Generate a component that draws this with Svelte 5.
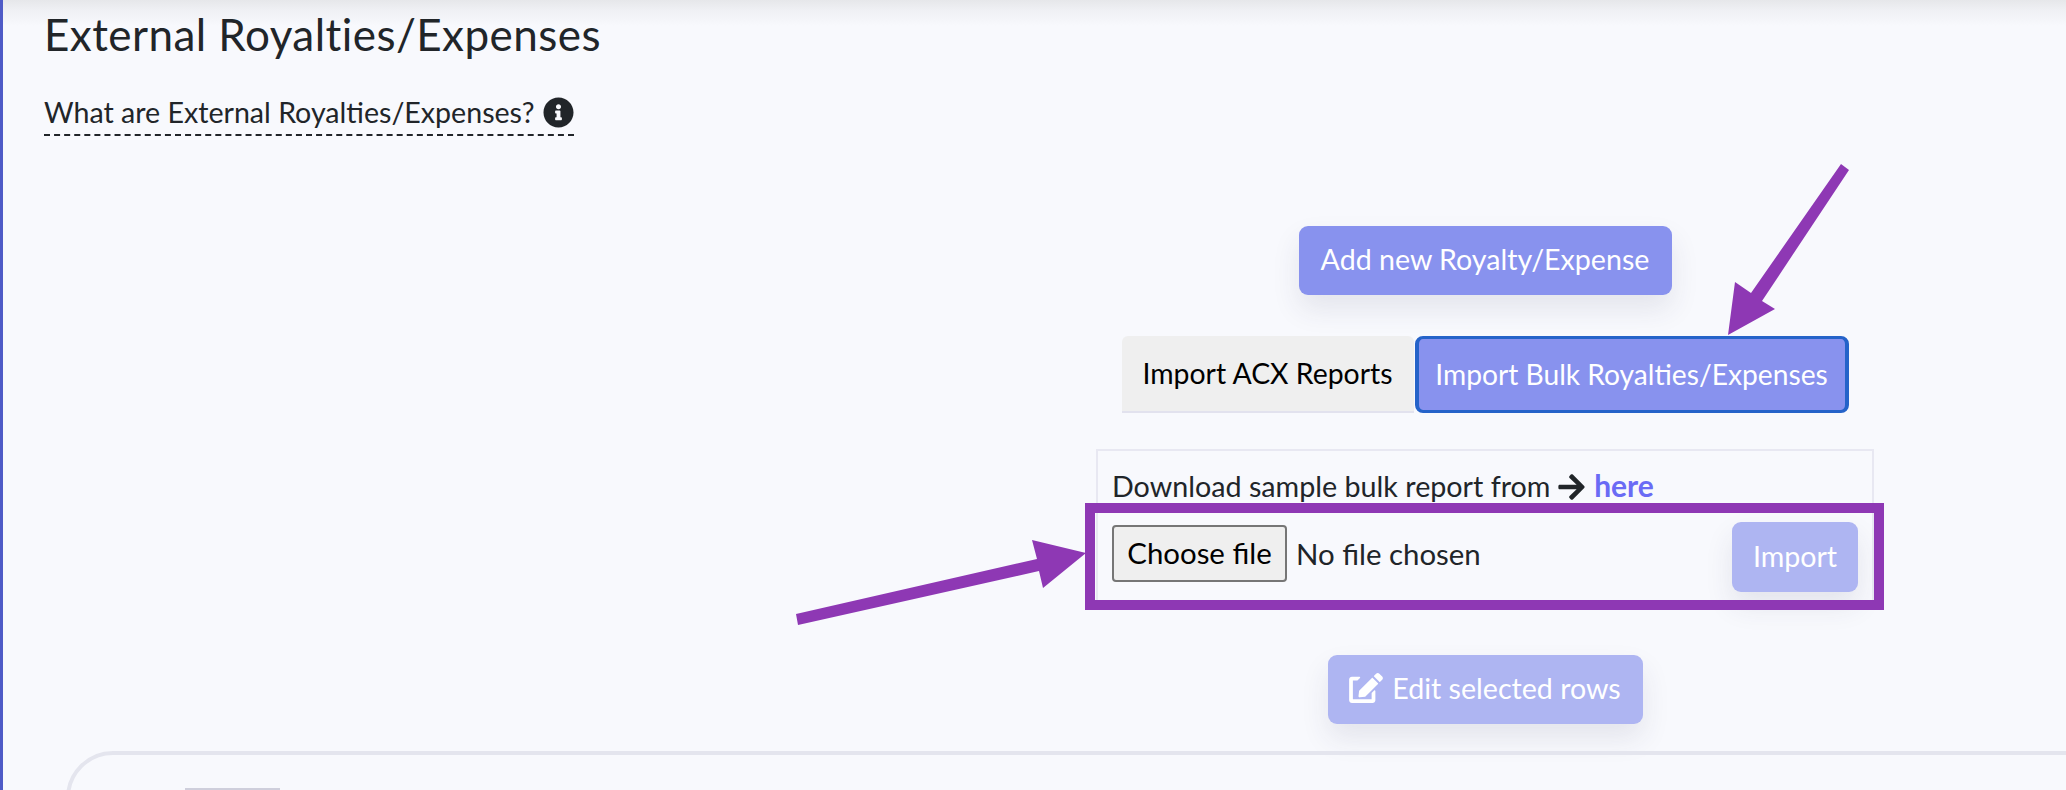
<script>
	const importTabs = [
		{ label: "Import ACX Reports", active: false },
		{ label: "Import Bulk Royalties/Expenses", active: true }
	];
</script>

<div class="page">
	<header class="heading">
		<h1>External Royalties/Expenses</h1>
		<div class="help">
			<span>What are External Royalties/Expenses?</span>
			<svg class="info" viewBox="0 0 512 512"><path d="M256 8C119.043 8 8 119.083 8 256c0 137 111.043 248 248 248s248-111 248-248C504 119.083 392.957 8 256 8zm0 110c23.196 0 42 18.804 42 42s-18.804 42-42 42-42-18.804-42-42 18.804-42 42-42zm56 254c0 6.627-5.373 12-12 12h-88c-6.627 0-12-5.373-12-12v-24c0-6.627 5.373-12 12-12h12v-64h-12c-6.627 0-12-5.373-12-12v-24c0-6.627 5.373-12 12-12h64c6.627 0 12 5.373 12 12v100h12c6.627 0 12 5.373 12 12v24z"/></svg>
		</div>
	</header>

	<section class="actions">
		<button class="btn add">Add new Royalty/Expense</button>

		<div class="tabs">
			{#each importTabs as tab}
				<button class="tab" class:active={tab.active}>{tab.label}</button>
			{/each}
		</div>

		<div class="panel">
			<p class="sample">
				Download sample bulk report from
				<svg class="arrow-right" viewBox="0 0 448 512"><path d="M190.5 66.9l22.2-22.2c9.4-9.4 24.6-9.4 33.9 0L441 239c9.4 9.4 9.4 24.6 0 33.9L246.6 467.3c-9.4 9.4-24.6 9.4-33.9 0l-22.2-22.2c-9.5-9.5-9.3-25 .4-34.3L311.4 296H24c-13.3 0-24-10.7-24-24v-32c0-13.3 10.7-24 24-24h287.4L190.9 101.2c-9.8-9.3-10-24.8-.4-34.3z"/></svg>
				<a href="#sample">here</a>
			</p>
			<div class="upload">
				<button class="file-btn">Choose file</button>
				<span class="file-name">No file chosen</span>
				<button class="btn import">Import</button>
			</div>
		</div>

		<button class="btn edit">
			<svg class="edit-icon" viewBox="0 0 576 512"><path d="M402.6 83.2l90.2 90.2c3.8 3.8 3.8 10 0 13.8L274.4 405.6l-92.8 10.3c-12.4 1.4-22.9-9.1-21.5-21.5l10.3-92.8L388.8 83.2c3.8-3.8 10-3.8 13.8 0zm162-22.9l-48.8-48.8c-15.2-15.2-39.9-15.2-55.2 0l-35.4 35.4c-3.8 3.8-3.8 10 0 13.8l90.2 90.2c3.8 3.8 10 3.8 13.8 0l35.4-35.4c15.2-15.3 15.2-40 0-55.2zM384 346.2V448H64V128h73.1c3.2 0 6.2-1.3 8.5-3.5l40-40c7.6-7.6 2.2-20.5-8.5-20.5H48C21.5 64 0 85.5 0 112v352c0 26.5 21.5 48 48 48h352c26.5 0 48-21.5 48-48V306.2c0-10.7-12.9-16-20.5-8.5l-40 40c-2.2 2.3-3.5 5.3-3.5 8.5z"/></svg>
			Edit selected rows
		</button>
	</section>

	<div class="table-card">
		<div class="table-stub"></div>
	</div>

	<!-- annotation drawn over the screenshot -->
	<svg class="annotations" viewBox="0 0 2066 790">
		<polygon points="1841,164 1849,170 1762,301 1775,309 1728,335 1735,282 1751,293" />
		<polygon points="796,614 798,625 1039,571 1043,588 1086,553 1032,540 1037,559" />
	</svg>
	<div class="highlight"></div>
</div>

<style>
	:global(body) {
		margin: 0;
		background: #f8f9fd;
	}

	.page {
		position: relative;
		width: 2066px;
		height: 790px;
		overflow: hidden;
		box-sizing: border-box;
		background: linear-gradient(#e6e7ea 0, #eff0f4 10px, #f8f9fd 26px);
		border-left: 3px solid #4f5bc7;
		padding: 0 0 0 41px;
		font-family: "Lato", "Open Sans", sans-serif;
		color: #212529;
	}

	.heading {
		height: 226px;
		padding-top: 9px;
		box-sizing: border-box;
	}

	h1 {
		margin: 0;
		font-size: 44px;
		font-weight: 400;
		line-height: 50px;
		letter-spacing: 0.45px;
	}

	.help {
		display: inline-flex;
		align-items: center;
		gap: 9px;
		margin-top: 31px;
		height: 46px;
		box-sizing: border-box;
		border-bottom: 2px dashed #212529;
		font-size: 28.6px;
	}

	.info {
		width: 31px;
		height: 31px;
		fill: #212529;
	}

	.actions {
		display: flex;
		flex-direction: column;
		align-items: center;
		width: 778px;
		margin-left: 1052px;
	}

	.btn {
		border: 0;
		border-radius: 9px;
		padding: 0 0 3px;
		color: #fff;
		font-family: inherit;
		font-size: 28.6px;
		background: #8892ee;
		box-shadow: 0 14px 28px rgba(50, 50, 93, 0.1);
	}

	.add {
		width: 373px;
		height: 69px;
	}

	.tabs {
		display: flex;
		margin-top: 41px;
	}

	.tab {
		height: 77px;
		padding: 0 0 2px;
		border: 0;
		border-bottom: 2px solid #e2e2ee;
		border-radius: 6px 6px 0 0;
		background: #efefef;
		color: #000;
		font-family: inherit;
		font-size: 28.4px;
		width: 292px;
	}

	.tab.active {
		width: 434px;
		margin-left: 1px;
		border: 3px solid #2563c9;
		border-width: 3px 4px;
		border-radius: 8px;
		background: #8892ee;
		color: #fff;
		font-size: 28.2px;
	}

	.panel {
		box-sizing: border-box;
		width: 778px;
		height: 151px;
		margin-top: 36px;
		padding: 0 13px 0 14px;
		border: 2px solid #e8e8f2;
		border-bottom: 0;
	}

	.sample {
		margin: 0;
		height: 62px;
		line-height: 48px;
		padding-top: 10px;
		box-sizing: border-box;
		font-size: 28.7px;
	}

	.arrow-right {
		width: 27px;
		height: 30px;
		margin-right: 2px;
		fill: #212529;
		vertical-align: -5px;
	}

	a {
		color: #6a6bf5;
		font-weight: 700;
		font-size: 30px;
		text-decoration: none;
	}

	.upload {
		display: flex;
		align-items: center;
		height: 88px;
		margin-top: -1px;
	}

	.file-btn {
		width: 175px;
		height: 57px;
		margin-bottom: 5px;
		padding: 0 0 2px;
		border: 2px solid #767676;
		border-radius: 4px;
		background: #efefef;
		color: #000;
		font-family: inherit;
		font-size: 29.4px;
	}

	.file-name {
		margin: 0 0 6px 9px;
		font-size: 29.4px;
	}

	.import {
		width: 126px;
		height: 70px;
		margin: 2px 1px 0 auto;
		background: #aeb5f2;
	}

	.edit {
		display: flex;
		align-items: center;
		justify-content: center;
		gap: 9px;
		width: 315px;
		height: 69px;
		margin-top: 55px;
		background: #aeb5f2;
	}

	.edit-icon {
		width: 34px;
		height: 30px;
		fill: #fff;
	}

	.table-card {
		box-sizing: border-box;
		position: relative;
		width: 2100px;
		height: 200px;
		margin: 27px 0 0 22px;
		border: 4px solid #e4e5ee;
		border-radius: 47px;
	}

	.table-stub {
		width: 95px;
		height: 2px;
		margin: 33px 0 0 115px;
		background: #cfcfdc;
	}

	.annotations {
		position: absolute;
		top: 0;
		left: -3px;
		width: 2066px;
		height: 790px;
		fill: #8e38b4;
		pointer-events: none;
	}

	.highlight {
		position: absolute;
		left: 1082px;
		top: 503px;
		width: 799px;
		height: 107px;
		box-sizing: border-box;
		border: 10px solid #8e38b4;
		pointer-events: none;
	}
</style>
